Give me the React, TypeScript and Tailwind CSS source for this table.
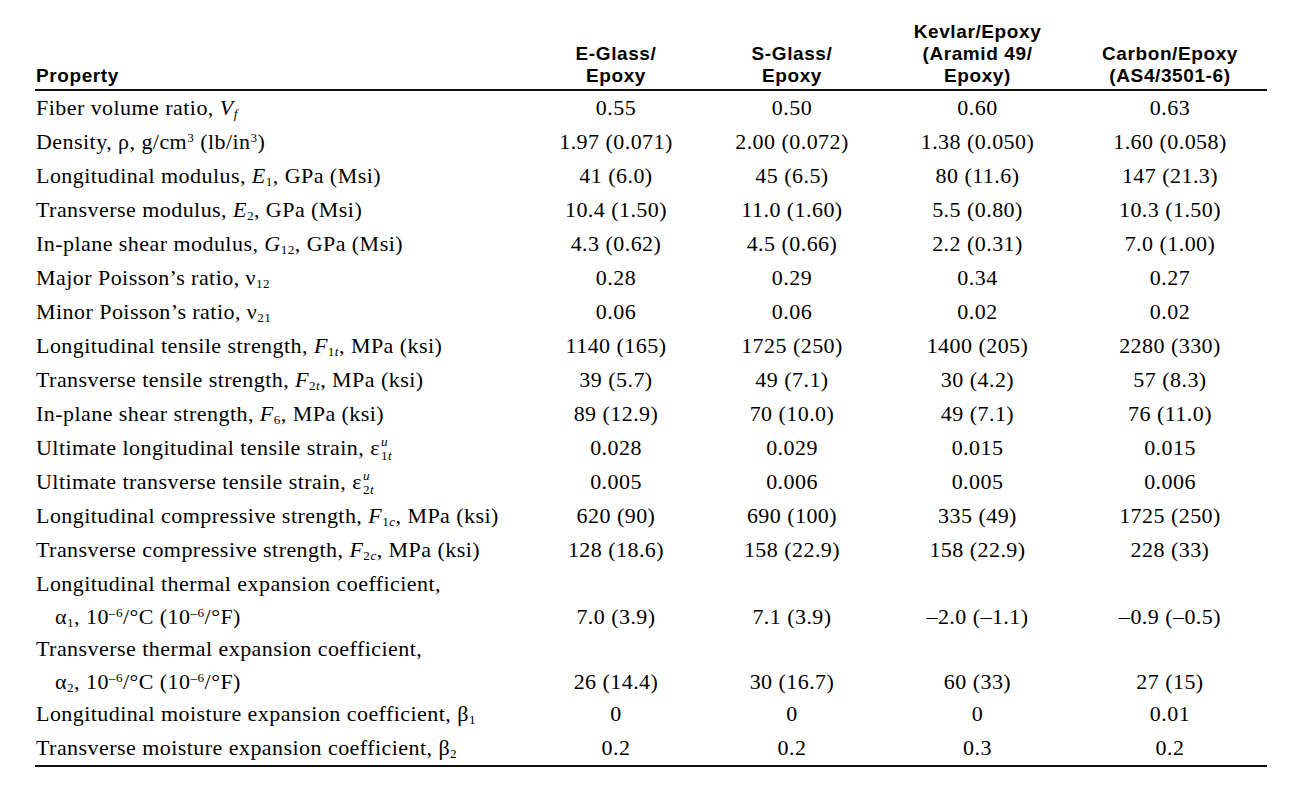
import React from "react";

const Sub = ({ children }: { children: React.ReactNode }) => (
  <sub className="text-[0.6em]">{children}</sub>
);
const Sup = ({ children }: { children: React.ReactNode }) => (
  <sup className="text-[0.6em]">{children}</sup>
);

const Eps = ({ sub }: { sub: React.ReactNode }) => (
  <span>
    ε
    <span className="inline-flex flex-col text-[0.6em] leading-[1] align-[0.62em] ml-[1px]">
      <i>u</i>
      <span>{sub}</span>
    </span>
  </span>
);

const Alpha = ({ n }: { n: string }) => (
  <>
    α<Sub>{n}</Sub>, 10<Sup>–6</Sup>/°C (10<Sup>–6</Sup>/°F)
  </>
);

type Row = {
  label: React.ReactNode;
  label2?: React.ReactNode;
  values: string[];
};

const rows: Row[] = [
  {
    label: (
      <>
        Fiber volume ratio, <i>V</i>
        <Sub>
          <i>f</i>
        </Sub>
      </>
    ),
    values: ["0.55", "0.50", "0.60", "0.63"],
  },
  {
    label: (
      <>
        Density, ρ, g/cm<Sup>3</Sup> (lb/in<Sup>3</Sup>)
      </>
    ),
    values: ["1.97 (0.071)", "2.00 (0.072)", "1.38 (0.050)", "1.60 (0.058)"],
  },
  {
    label: (
      <>
        Longitudinal modulus, <i>E</i>
        <Sub>1</Sub>, GPa (Msi)
      </>
    ),
    values: ["41 (6.0)", "45 (6.5)", "80 (11.6)", "147 (21.3)"],
  },
  {
    label: (
      <>
        Transverse modulus, <i>E</i>
        <Sub>2</Sub>, GPa (Msi)
      </>
    ),
    values: ["10.4 (1.50)", "11.0 (1.60)", "5.5 (0.80)", "10.3 (1.50)"],
  },
  {
    label: (
      <>
        In-plane shear modulus, <i>G</i>
        <Sub>12</Sub>, GPa (Msi)
      </>
    ),
    values: ["4.3 (0.62)", "4.5 (0.66)", "2.2 (0.31)", "7.0 (1.00)"],
  },
  {
    label: (
      <>
        Major Poisson’s ratio, ν<Sub>12</Sub>
      </>
    ),
    values: ["0.28", "0.29", "0.34", "0.27"],
  },
  {
    label: (
      <>
        Minor Poisson’s ratio, ν<Sub>21</Sub>
      </>
    ),
    values: ["0.06", "0.06", "0.02", "0.02"],
  },
  {
    label: (
      <>
        Longitudinal tensile strength, <i>F</i>
        <Sub>
          1<i>t</i>
        </Sub>
        , MPa (ksi)
      </>
    ),
    values: ["1140 (165)", "1725 (250)", "1400 (205)", "2280 (330)"],
  },
  {
    label: (
      <>
        Transverse tensile strength, <i>F</i>
        <Sub>
          2<i>t</i>
        </Sub>
        , MPa (ksi)
      </>
    ),
    values: ["39 (5.7)", "49 (7.1)", "30 (4.2)", "57 (8.3)"],
  },
  {
    label: (
      <>
        In-plane shear strength, <i>F</i>
        <Sub>6</Sub>, MPa (ksi)
      </>
    ),
    values: ["89 (12.9)", "70 (10.0)", "49 (7.1)", "76 (11.0)"],
  },
  {
    label: (
      <>
        Ultimate longitudinal tensile strain,{" "}
        <Eps
          sub={
            <>
              1<i>t</i>
            </>
          }
        />
      </>
    ),
    values: ["0.028", "0.029", "0.015", "0.015"],
  },
  {
    label: (
      <>
        Ultimate transverse tensile strain,{" "}
        <Eps
          sub={
            <>
              2<i>t</i>
            </>
          }
        />
      </>
    ),
    values: ["0.005", "0.006", "0.005", "0.006"],
  },
  {
    label: (
      <>
        Longitudinal compressive strength, <i>F</i>
        <Sub>
          1<i>c</i>
        </Sub>
        , MPa (ksi)
      </>
    ),
    values: ["620 (90)", "690 (100)", "335 (49)", "1725 (250)"],
  },
  {
    label: (
      <>
        Transverse compressive strength, <i>F</i>
        <Sub>
          2<i>c</i>
        </Sub>
        , MPa (ksi)
      </>
    ),
    values: ["128 (18.6)", "158 (22.9)", "158 (22.9)", "228 (33)"],
  },
  {
    label: <>Longitudinal thermal expansion coefficient,</>,
    label2: <Alpha n="1" />,
    values: ["7.0 (3.9)", "7.1 (3.9)", "–2.0 (–1.1)", "–0.9 (–0.5)"],
  },
  {
    label: <>Transverse thermal expansion coefficient,</>,
    label2: <Alpha n="2" />,
    values: ["26 (14.4)", "30 (16.7)", "60 (33)", "27 (15)"],
  },
  {
    label: (
      <>
        Longitudinal moisture expansion coefficient, β<Sub>1</Sub>
      </>
    ),
    values: ["0", "0", "0", "0.01"],
  },
  {
    label: (
      <>
        Transverse moisture expansion coefficient, β<Sub>2</Sub>
      </>
    ),
    values: ["0.2", "0.2", "0.3", "0.2"],
  },
];

const headers: string[][] = [
  ["E-Glass/", "Epoxy"],
  ["S-Glass/", "Epoxy"],
  ["Kevlar/Epoxy", "(Aramid 49/", "Epoxy)"],
  ["Carbon/Epoxy", "(AS4/3501-6)"],
];

const cols = "grid grid-cols-[495px_172px_180px_191px_194px]";

export default function App() {
  return (
    <div className="w-[1292px] h-[791px] bg-white text-black overflow-hidden">
      <div className="ml-[35px] w-[1232px] pt-[20.5px]">
        {/* Header */}
        <div
          className={`${cols} items-end pb-[2px] border-b-2 border-[#111] font-['Liberation_Sans',Arial,sans-serif] font-bold text-[19px] leading-[22px] tracking-[0.6px]`}
        >
          <div className="pl-[1px]">Property</div>
          {headers.map((h, i) => (
            <div key={i} className="flex flex-col items-center text-center">
              {h.map((line, j) => (
                <span key={j} className="whitespace-nowrap">
                  {line}
                </span>
              ))}
            </div>
          ))}
        </div>

        {/* Body */}
        <div className="border-b-2 border-[#111] font-['Liberation_Serif','Times_New_Roman',serif] text-[22px] tracking-[0.45px]">
          {rows.map((r, i) => (
            <div key={i} className={`${cols} items-end`}>
              <div className="pl-[1px] whitespace-nowrap">
                <div className="h-[34px] leading-[34px]">{r.label}</div>
                {r.label2 && (
                  <div className="h-[31px] leading-[31px] pl-[19px]">{r.label2}</div>
                )}
              </div>
              {r.values.map((v, j) => (
                <div
                  key={j}
                  className={`text-center whitespace-nowrap ${
                    r.label2 ? "h-[31px] leading-[31px]" : "h-[34px] leading-[34px]"
                  }`}
                >
                  {v}
                </div>
              ))}
            </div>
          ))}
        </div>
      </div>
    </div>
  );
}
